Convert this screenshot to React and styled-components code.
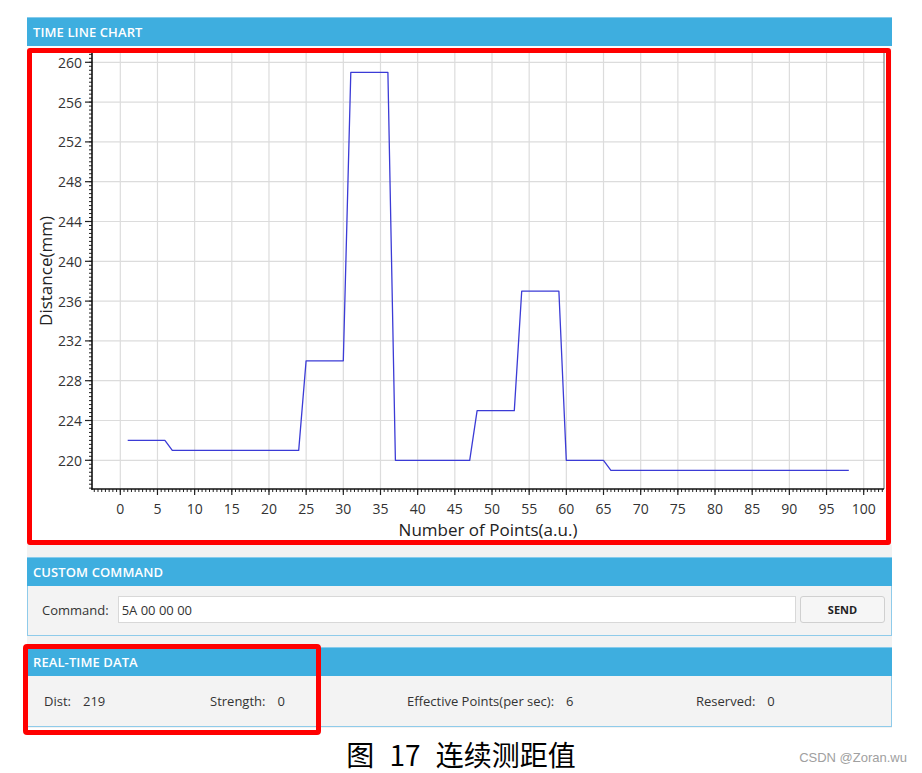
import React from 'react'
import styled, { createGlobalStyle } from 'styled-components'

// chart geometry (px, inside the red frame)
const CW = 854
const CH = 487
const PL = 60
const PR = 852
const PT = 0
const PB = 436
const xs = v => 88.3 + 7.434 * v
const ys = v => 407.3 - 9.95 * (v - 220)

const valueAt = i => {
    if (i <= 6) return 222
    if (i <= 24) return 221
    if (i <= 30) return 230
    if (i <= 36) return 259
    if (i <= 47) return 220
    if (i <= 53) return 225
    if (i <= 59) return 237
    if (i <= 65) return 220
    return 219
}

const points = []
for (let i = 1; i <= 98; i++) points.push(`${xs(i).toFixed(1)},${ys(valueAt(i)).toFixed(1)}`)

const xMajor = []
for (let v = 0; v <= 100; v += 5) xMajor.push(v)
const xMinor = []
for (let v = -3.5; v <= 102.6; v += 0.5) xMinor.push(v)
const yMajor = []
for (let v = 220; v <= 260; v += 4) yMajor.push(v)
const yMinor = []
for (let v = 217.2; v <= 260.9; v += 0.4) yMinor.push(v)

function TimeChart() {
    return (
        <ChartSvg width={CW} height={CH} viewBox={`0 0 ${CW} ${CH}`}>
            <rect x={PL} y={PT} width={PR - PL} height={PB - PT} fill="#fff" />
            {xMajor.map(v => (
                <line key={'gx' + v} x1={xs(v)} x2={xs(v)} y1={PT} y2={PB} stroke="#dcdcdc" strokeWidth="1.2" />
            ))}
            {yMajor.map(v => (
                <line key={'gy' + v} x1={PL} x2={PR} y1={ys(v)} y2={ys(v)} stroke="#dcdcdc" strokeWidth="1.2" />
            ))}
            <line x1={PR} x2={PR} y1={PT} y2={PB} stroke="#6b6b6b" strokeWidth="1" />

            {xMinor.map(v => (
                <line key={'tx' + v} x1={xs(v)} x2={xs(v)} y1={PB} y2={PB + 3} stroke="#222" strokeWidth="1" />
            ))}
            {xMajor.map(v => (
                <line key={'TX' + v} x1={xs(v)} x2={xs(v)} y1={PB} y2={PB + 6} stroke="#222" strokeWidth="1.2" />
            ))}
            {yMinor.map(v => (
                <line key={'ty' + v} x1={PL - 3} x2={PL} y1={ys(v)} y2={ys(v)} stroke="#222" strokeWidth="1" />
            ))}
            {yMajor.map(v => (
                <line key={'TY' + v} x1={PL - 7} x2={PL} y1={ys(v)} y2={ys(v)} stroke="#222" strokeWidth="1.2" />
            ))}
            <line x1={PL} x2={PL} y1={PT} y2={PB + 0.7} stroke="#111" strokeWidth="1.6" />
            <line x1={PL - 0.7} x2={PR} y1={PB} y2={PB} stroke="#111" strokeWidth="1.6" />

            {yMajor.map(v => (
                <TickText key={'ly' + v} x={PL - 10} y={ys(v)} textAnchor="end" dominantBaseline="central">{v}</TickText>
            ))}
            {xMajor.map(v => (
                <TickText key={'lx' + v} x={xs(v)} y={455.5} textAnchor="middle" dominantBaseline="central">{v}</TickText>
            ))}

            <AxisTitle x={456} y={476} textAnchor="middle" dominantBaseline="central">Number of Points(a.u.)</AxisTitle>
            <AxisTitle x={13} y={218} textAnchor="middle" dominantBaseline="central" transform="rotate(-90 13 218)">Distance(mm)</AxisTitle>

            <polyline points={points.join(' ')} fill="none" stroke="#3b3bd6" strokeWidth="1.3" strokeLinejoin="round" />
        </ChartSvg>
    )
}

function App() {
    return (
        <>
            <GlobalStyle />
            <Page>
                <Window>
                    <Panel>
                        <PanelHeader>TIME LINE CHART</PanelHeader>
                        <ChartBody>
                            <ChartFrame>
                                <TimeChart />
                            </ChartFrame>
                        </ChartBody>
                    </Panel>

                    <Panel $gap={12}>
                        <PanelHeader>CUSTOM COMMAND</PanelHeader>
                        <PanelBody $h={50}>
                            <CommandRow>
                                <Label>Command:</Label>
                                <CommandInput defaultValue="5A 00 00 00" readOnly />
                                <SendButton>SEND</SendButton>
                            </CommandRow>
                        </PanelBody>
                    </Panel>

                    <Panel $gap={11}>
                        <PanelHeader>REAL-TIME DATA</PanelHeader>
                        <PanelBody $h={51}>
                            <DataRow>
                                <DataItem><span>Dist:</span><span>219</span></DataItem>
                                <DataItem><span>Strength:</span><span>0</span></DataItem>
                                <DataItem><span>Effective Points(per sec):</span><span>6</span></DataItem>
                                <DataItem><span>Reserved:</span><span>0</span></DataItem>
                            </DataRow>
                        </PanelBody>
                        <Highlight />
                    </Panel>
                </Window>

                <Footer>
                    <span />
                    <Caption>图 17 连续测距值</Caption>
                    <Watermark>CSDN @Zoran.wu</Watermark>
                </Footer>
            </Page>
        </>
    )
}

const GlobalStyle = createGlobalStyle`
    body {
        margin: 0;
        background: #ffffff;
        font-family: "Open Sans", "Noto Sans", sans-serif;
    }
`

const Page = styled.div`
    width: 922px;
    height: 773px;
    box-sizing: border-box;
    padding: 17px 0 0 27px;
    overflow: hidden;
`

const Window = styled.div`
    width: 865px;
    background: #f2f2f2;
    display: flex;
    flex-direction: column;
    padding-bottom: 1px;
`

const Panel = styled.section`
    position: relative;
    margin-top: ${p => p.$gap || 0}px;
`

const PanelHeader = styled.div`
    height: 29px;
    box-sizing: border-box;
    background: #3eaedf;
    border-top: 1px solid #86cbec;
    color: #ffffff;
    font-size: 13px;
    font-weight: 600;
    display: flex;
    align-items: center;
    padding-left: 6px;
    letter-spacing: 0.1px;
`

const ChartBody = styled.div`
    padding-top: 2px;
    background: #fbfbfb;
`

const ChartFrame = styled.div`
    width: 864px;
    height: 497px;
    box-sizing: border-box;
    border: 5px solid #ff0000;
    border-radius: 3px;
    background: #ffffff;
    overflow: hidden;
`

const ChartSvg = styled.svg`
    display: block;
`

const TickText = styled.text`
    font-family: "Open Sans", "Noto Sans", sans-serif;
    font-size: 14px;
    fill: #333333;
`

const AxisTitle = styled.text`
    font-family: "Open Sans", "Noto Sans", sans-serif;
    font-size: 17px;
    fill: #222222;
`

const PanelBody = styled.div`
    height: ${p => p.$h}px;
    box-sizing: border-box;
    background: #f3f3f3;
    border: 1px solid #8fcbea;
    border-top: none;
    font-size: 13px;
    color: #333333;
`

const CommandRow = styled.div`
    display: flex;
    align-items: center;
    padding: 10px 6px 0 14px;
`

const Label = styled.span`
    margin-right: 9px;
`

const CommandInput = styled.input`
    flex: 1;
    height: 27px;
    box-sizing: border-box;
    border: 1px solid #d8d8d8;
    background: #ffffff;
    padding: 0 3px;
    font-family: inherit;
    font-size: 13px;
    color: #333333;
    outline: none;
`

const SendButton = styled.button`
    width: 85px;
    height: 27px;
    margin-left: 4px;
    box-sizing: border-box;
    border: 1px solid #d0d0d0;
    border-radius: 3px;
    background: #f6f6f6;
    font-family: inherit;
    font-size: 11px;
    font-weight: 700;
    color: #222222;
`

const DataRow = styled.div`
    height: 100%;
    display: grid;
    grid-template-columns: 166px 197px 289px 1fr;
    align-items: center;
    padding-left: 16px;
`

const DataItem = styled.div`
    display: flex;
    gap: 12px;
`

const Highlight = styled.div`
    position: absolute;
    left: -4px;
    top: -3px;
    width: 298px;
    height: 91px;
    box-sizing: border-box;
    border: 5px solid #ff0000;
    border-radius: 4px;
    pointer-events: none;
`

const Footer = styled.div`
    display: grid;
    grid-template-columns: 1fr auto 1fr;
    align-items: center;
    margin-left: -27px;
    width: 922px;
    padding-top: 12px;
`

const Caption = styled.div`
    font-family: "Noto Sans CJK SC", sans-serif;
    font-size: 28px;
    line-height: 28px;
    color: #000000;
    word-spacing: 9px;
`

const Watermark = styled.div`
    justify-self: end;
    padding: 6px 15px 0 0;
    font-family: "Liberation Sans", Arial, sans-serif;
    font-size: 13px;
    color: #a0a0a0;
`

export default App
